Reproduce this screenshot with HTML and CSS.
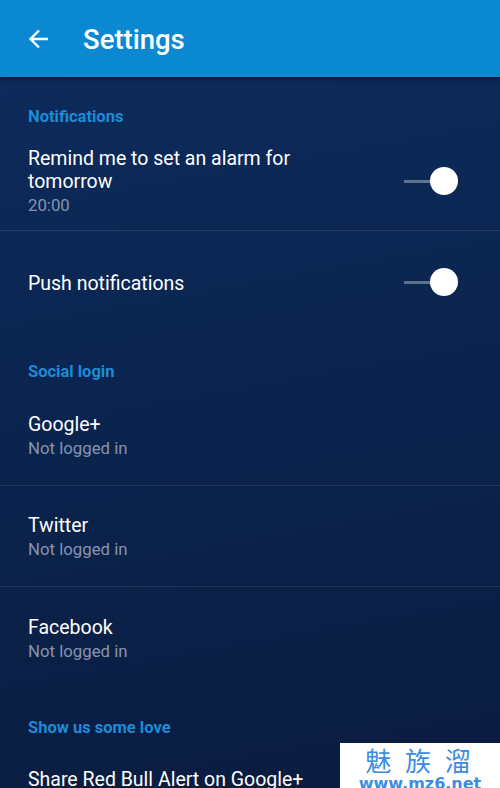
FILE: index.html
```html
<!DOCTYPE html>
<html lang="en">
<head>
    <meta charset="UTF-8">
    <title>Settings</title>
    <link rel="stylesheet" href="styles.css">
</head>
<body>
<div id="app">
    <div class="toolbar">
        <span class="back">
            <svg width="24" height="24" viewBox="0 0 24 24"><path d="M21 12H4.5M12 3.5L3.5 12l8.5 8.5" fill="none" stroke="#fff" stroke-width="2.4"/></svg>
        </span>
        <h1>Settings</h1>
    </div>
    <div class="list">
        <div class="category">Notifications</div>
        <div class="pref line">
            <div class="text">
                <div class="title">Remind me to set an alarm for tomorrow</div>
                <div class="summary">20:00</div>
            </div>
            <span class="switch"><i></i></span>
        </div>
        <div class="pref">
            <div class="text">
                <div class="title">Push notifications</div>
            </div>
            <span class="switch"><i></i></span>
        </div>

        <div class="category">Social login</div>
        <div class="pref line">
            <div class="text">
                <div class="title">Google+</div>
                <div class="summary">Not logged in</div>
            </div>
        </div>
        <div class="pref line">
            <div class="text">
                <div class="title">Twitter</div>
                <div class="summary">Not logged in</div>
            </div>
        </div>
        <div class="pref">
            <div class="text">
                <div class="title">Facebook</div>
                <div class="summary">Not logged in</div>
            </div>
        </div>

        <div class="category">Show us some love</div>
        <div class="pref top">
            <div class="text">
                <div class="title">Share Red Bull Alert on Google+</div>
            </div>
        </div>
    </div>
    <div class="mark">
        <div class="mark-cn">魅 族 溜</div>
        <div class="mark-en">www.mz6.net</div>
    </div>
</div>
</body>
</html>
```

FILE: styles.css
```css
*{
    margin: 0;
    padding: 0;
}
html,body{
    height: 100%;
    overflow: hidden;
}
body{
    font-family: Roboto, "Noto Sans", sans-serif;
    background: #0a1f45;
}
#app{
    position: relative;
    height: 788px;
    background: linear-gradient(170deg, #0d2c5d 0%, #0b2550 45%, #0a1c3f 100%);
    overflow: hidden;
}
.toolbar{
    height: 77px;
    background-color: #0a89d2;
    display: flex;
    align-items: center;
    box-shadow: 0 2px 4px rgba(0, 0, 0, 0.45);
    position: relative;
    z-index: 2;
}
.back{
    width: 24px;
    height: 24px;
    margin-left: 27px;
    margin-top: 1px;
}
.toolbar h1{
    margin-left: 32px;
    color: #ffffff;
    font-size: 27.5px;
    font-weight: 500;
    margin-top: 2px;
}
.category{
    padding: 29px 28px 2px;
    line-height: 22px;
    font-size: 16.5px;
    font-weight: 700;
    color: #1d8bd6;
}
.pref{
    min-height: 101px;
    box-sizing: border-box;
    display: flex;
    align-items: center;
    padding: 4px 42px 0 28px;
}
.pref.line{
    border-bottom: 1px solid rgba(255, 255, 255, 0.09);
}
.pref.top{
    align-items: flex-start;
    padding-top: 27px;
}
.text{
    flex: 1;
}
.title{
    color: #ffffff;
    font-size: 19.5px;
    line-height: 23px;
    padding-right: 50px;
}
.summary{
    color: #8594b0;
    font-size: 16.8px;
    line-height: 25px;
}
.switch{
    position: relative;
    width: 54px;
    height: 28px;
    margin-top: -3px;
}
.switch::before{
    content: "";
    position: absolute;
    left: 0;
    top: 13px;
    width: 36px;
    height: 3px;
    background-color: rgba(255, 255, 255, 0.35);
}
.switch i{
    position: absolute;
    right: 0;
    top: 0;
    width: 28px;
    height: 28px;
    border-radius: 50%;
    background-color: #ffffff;
}
.mark{
    position: absolute;
    left: 340px;
    top: 743px;
    width: 160px;
    height: 50px;
    background-color: #ffffff;
    text-align: center;
    color: #3b8de3;
}
.mark-cn{
    font-family: "Noto Sans CJK SC", sans-serif;
    font-size: 26px;
    line-height: 26px;
    letter-spacing: 4px;
    padding-top: 4px;
}
.mark-en{
    font-family: "DejaVu Sans", sans-serif;
    font-weight: 700;
    font-size: 16px;
    line-height: 16px;
    margin-top: 3px;
}
```
